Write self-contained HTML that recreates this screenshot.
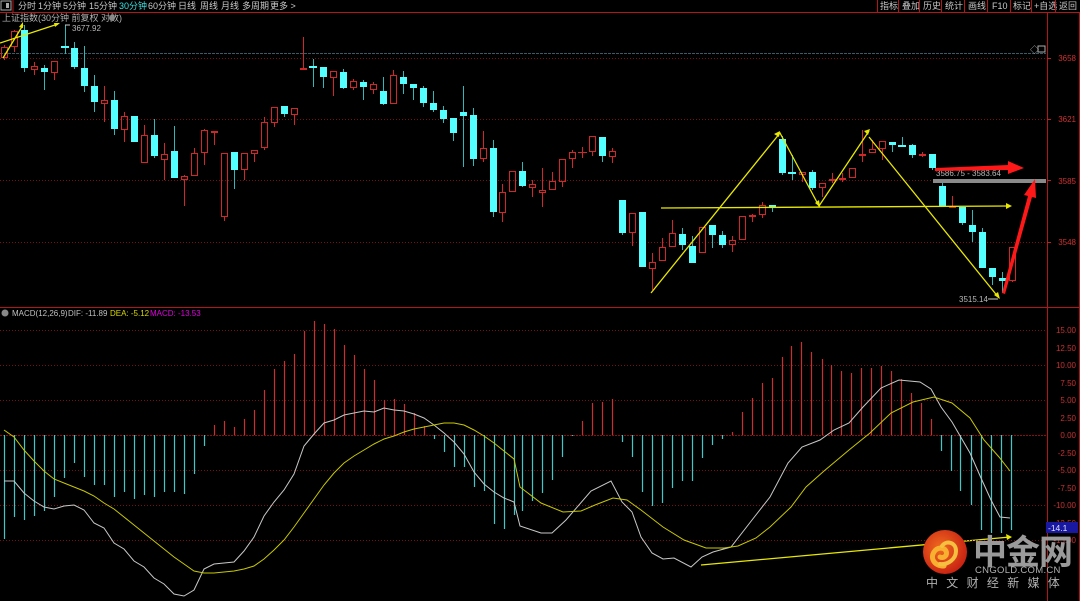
<!DOCTYPE html>
<html><head><meta charset="utf-8">
<style>
html,body{margin:0;padding:0;background:#000;width:1080px;height:601px;overflow:hidden}
svg{display:block}
text{font-family:"Liberation Sans","Noto Sans CJK SC",sans-serif}
</style></head><body>
<svg width="1080" height="601" viewBox="0 0 1080 601" xmlns="http://www.w3.org/2000/svg">
<rect width="1080" height="601" fill="#000"/>
<!-- top bar -->
<g font-size="9" fill="#c8c8c8">
<rect x="1" y="1" width="10" height="9" fill="none" stroke="#aaa" stroke-width="1"/>
<rect x="6" y="3" width="3" height="5" fill="#aaa"/>
<text x="18" y="9">分时</text><text x="38" y="9">1分钟</text><text x="63" y="9">5分钟</text><text x="89" y="9">15分钟</text>
<text x="119" y="9" fill="#40e0e0">30分钟</text><text x="148" y="9">60分钟</text><text x="178" y="9">日线</text><text x="200" y="9">周线</text><text x="221" y="9">月线</text><text x="242" y="9">多周期</text><text x="270" y="9">更多 &gt;</text>
<text x="880" y="9">指标</text><text x="902" y="9">叠加</text><text x="923" y="9">历史</text><text x="945" y="9">统计</text><text x="968" y="9">画线</text><text x="992" y="9">F10</text><text x="1013" y="9">标记</text><text x="1034" y="9">+自选</text><text x="1059" y="9">返回</text>
</g>
<g stroke="#b01818" stroke-width="1">
<line x1="0" y1="12.5" x2="1080" y2="12.5"/>
<line x1="13" y1="0" x2="13" y2="12"/>
<line x1="877.5" y1="0" x2="877.5" y2="12"/><line x1="898.5" y1="0" x2="898.5" y2="12"/><line x1="919.5" y1="0" x2="919.5" y2="12"/><line x1="941.5" y1="0" x2="941.5" y2="12"/><line x1="964.5" y1="0" x2="964.5" y2="12"/><line x1="987.5" y1="0" x2="987.5" y2="12"/><line x1="1010.5" y1="0" x2="1010.5" y2="12"/><line x1="1031.5" y1="0" x2="1031.5" y2="12"/><line x1="1055.5" y1="0" x2="1055.5" y2="12"/>
<line x1="1047.5" y1="12" x2="1047.5" y2="601"/>
<line x1="1079.5" y1="12" x2="1079.5" y2="601"/>
<line x1="0" y1="307.5" x2="1080" y2="307.5"/>
</g>
<text x="2" y="21" font-size="9" fill="#b0b0b0">上证指数(30分钟 前复权 对数)</text>
<circle cx="112" cy="18" r="3" fill="#888"/>
<!-- grids main -->
<line x1="0" y1="53.5" x2="1046" y2="53.5" stroke="#3a5a6a" stroke-dasharray="3,1"/>
<g stroke="#7a1010" stroke-dasharray="1,2">
<line x1="0" y1="58.5" x2="1046" y2="58.5"/><line x1="0" y1="119.5" x2="1046" y2="119.5"/><line x1="0" y1="180.5" x2="1046" y2="180.5"/><line x1="0" y1="242.5" x2="1046" y2="242.5"/>
</g>
<g font-size="8" fill="#d03030" text-anchor="end">
<text x="1076" y="61">3658</text><text x="1076" y="122">3621</text><text x="1076" y="184">3585</text><text x="1076" y="245">3548</text>
</g>
<g stroke="#c02020"><line x1="1047" y1="58.5" x2="1051" y2="58.5"/><line x1="1047" y1="119.5" x2="1051" y2="119.5"/><line x1="1047" y1="180.5" x2="1051" y2="180.5"/><line x1="1047" y1="242.5" x2="1051" y2="242.5"/></g>
<text x="1030" y="53" font-size="9" fill="#aaa">◇</text>
<rect x="1038" y="46" width="7" height="6" fill="none" stroke="#aaa"/>
<!-- cyan candles -->
<path stroke="#30b8b8" stroke-width="1" fill="none" d="M24.5 25V72M44.5 65V90M65.5 25V54M74.5 42V69M84.5 46V92M94.5 75V112M114.5 91V135M134.5 116V142M154.5 119V158M174.5 126V178M234.5 152V189M284.5 106V117M313.5 59V87M323.5 67V88M343.5 69V89M363.5 80V100M383.5 77V105M403.5 71V94M413.5 84V100M423.5 86V107M433.5 91V112M443.5 106V123M453.5 118V141M463.5 86V167M473.5 108V166M493.5 140V217M522.5 162V187M602.5 137V162M622.5 200V235M642.5 212V267M682.5 228V250M692.5 236V263M712.5 225V248M722.5 231V248M772.5 205V212M782.5 136V175M792.5 155V180M812.5 170V190M892.5 142V152M902.5 137V147M912.5 144V158M932.5 154V170M942.5 182V206M962.5 207V225M972.5 210V242M982.5 228V268M992.5 268V285M1002.5 272V293"/>
<path fill="#54ffff" d="M21 30h7v38h-7zM41 68h7v4h-7zM61 46h8v2h-8zM71 48h7v19h-7zM81 68h7v18h-7zM91 86h7v16h-7zM111 100h7v29h-7zM131 116h7v26h-7zM151 135h7v21h-7zM171 151h7v27h-7zM231 152h7v18h-7zM281 106h7v8h-7zM309 66h8v2h-8zM320 67h7v10h-7zM340 72h7v16h-7zM360 82h7v5h-7zM380 91h7v13h-7zM400 77h7v7h-7zM410 84h7v4h-7zM420 88h7v15h-7zM430 103h7v7h-7zM440 110h7v9h-7zM450 118h7v15h-7zM460 112h7v4h-7zM470 115h7v44h-7zM490 148h7v64h-7zM519 171h7v15h-7zM599 137h7v19h-7zM619 200h7v33h-7zM639 212h7v55h-7zM679 234h7v11h-7zM689 246h7v17h-7zM709 225h7v10h-7zM719 235h7v10h-7zM769 205h7v3h-7zM779 139h7v34h-7zM788 172h8v2h-8zM809 172h7v16h-7zM889 142h7v3h-7zM898 145h8v2h-8zM909 145h7v10h-7zM929 154h7v14h-7zM939 186h7v20h-7zM959 207h7v16h-7zM969 225h7v7h-7zM979 232h7v36h-7zM989 268h7v9h-7zM999 278h7v3h-7z"/>
<!-- red candles -->
<path stroke="#d02828" stroke-width="1" fill="none" d="M1.5 47.5h6v10h-6zM4.5 45V47M4.5 58V60M11.5 31.5h6v15h-6zM14.5 30V31M14.5 47V52M31.5 66.5h6v3h-6zM34.5 62V66M34.5 70V75M51.5 61.5h6v11h-6zM54.5 73V80M101.5 100.5h6v3h-6zM104.5 86V100M104.5 104V122M121.5 116.5h6v13h-6zM124.5 112V116M124.5 130V142M141.5 135.5h6v27h-6zM144.5 125V135M161.5 154.5h6v5h-6zM164.5 143V154M164.5 160V180M181.5 176.5h6v3h-6zM184.5 175V176M184.5 180V206M191.5 153.5h6v22h-6zM194.5 148V153M201.5 130.5h6v22h-6zM204.5 129V130M204.5 153V165M211.5 131.5h6v1h-6zM214.5 132V145M221.5 153.5h6v63h-6zM224.5 217V221M241.5 153.5h6v16h-6zM244.5 170V180M251.5 150.5h6v3h-6zM254.5 154V162M261.5 122.5h6v25h-6zM264.5 117V122M264.5 148V150M271.5 107.5h6v15h-6zM274.5 123V127M291.5 108.5h6v6h-6zM294.5 115V125M300.5 68.5h6v1h-6zM303.5 37V68M330.5 71.5h6v6h-6zM333.5 78V96M350.5 81.5h6v6h-6zM353.5 79V81M353.5 88V90M370.5 84.5h6v5h-6zM373.5 82V84M373.5 90V94M390.5 75.5h6v28h-6zM393.5 70V75M480.5 148.5h6v10h-6zM483.5 131V148M483.5 159V162M499.5 192.5h6v20h-6zM502.5 184V192M502.5 213V222M509.5 171.5h6v20h-6zM529.5 184.5h6v3h-6zM532.5 180V184M532.5 188V197M539.5 190.5h6v2h-6zM542.5 168V190M542.5 193V207M549.5 181.5h6v8h-6zM552.5 172V181M559.5 159.5h6v22h-6zM562.5 182V187M569.5 152.5h6v6h-6zM572.5 150V152M572.5 159V168M578 152.5h9M582.5 147V158M589.5 136.5h6v15h-6zM592.5 152V156M609.5 151.5h6v5h-6zM612.5 148V151M612.5 157V163M629.5 213.5h6v19h-6zM632.5 233V246M649.5 262.5h6v6h-6zM652.5 253V262M652.5 269V290M659.5 247.5h6v13h-6zM662.5 238V247M669.5 233.5h6v13h-6zM672.5 220V233M699.5 227.5h6v25h-6zM729.5 240.5h6v4h-6zM732.5 236V240M732.5 245V252M739.5 216.5h6v23h-6zM749.5 215.5h6v1h-6zM752.5 214V215M752.5 217V222M759.5 205.5h6v9h-6zM762.5 202V205M762.5 215V218M799.5 172.5h6v2h-6zM802.5 175V182M819.5 183.5h6v4h-6zM822.5 188V197M829.5 179.5h6v1h-6zM832.5 173V179M832.5 181V183M839.5 178.5h6v1h-6zM842.5 173V178M842.5 180V182M849.5 168.5h6v9h-6zM859.5 154.5h6v1h-6zM862.5 130V154M862.5 156V162M869.5 149.5h6v3h-6zM872.5 140V149M879.5 141.5h6v7h-6zM882.5 149V160M919.5 154.5h6v1h-6zM922.5 152V154M922.5 156V157M949.5 206.5h6v1h-6zM952.5 196V206M1009.5 247.5h6v33h-6zM1012.5 281V282"/>
<!-- labels -->
<path d="M65 25H70" stroke="#ccc" stroke-width="1"/>
<text x="72" y="31" font-size="8" fill="#b8b8b8">3677.92</text>
<text x="959" y="302" font-size="8" fill="#b8b8b8">3515.14</text>
<path d="M988 299H998" stroke="#ccc"/>
<rect x="933" y="179" width="113" height="4" fill="#8a8a8a"/>
<text x="936" y="176" font-size="8" fill="#b8b8b8">3586.75 - 3583.64</text>
<!-- yellow analysis lines -->
<g stroke="#e8e800" stroke-width="1.3" fill="none">
<path d="M0 43L58 24M3 58L23 25"/>
<path d="M651 293L780 133L819 206L869 131M869 137L999 298"/>
<path d="M661 208L1010 206"/>
<path d="M701 565L1010 537"/>
</g>
<g fill="#e8e800">
<path d="M780 131l-6 3 5 3z"/><path d="M820 207l-1-7-4 3z"/><path d="M870 129l-6 2 4 4z"/><path d="M1000 299l-2-7-4 3z"/><path d="M1012 206l-6-3v6z"/><path d="M1012 537l-6-3 1 6z"/><path d="M23 22l-4 5 4 1z"/><path d="M60 23l-6 0 1 4z"/>
</g>
<!-- red arrows -->
<g fill="#ff1818">
<path d="M935 168L1008 165L1008 161L1024 168L1008 174L1008 170L935 171z"/>
<path d="M1002 293L1028 196L1024 195L1035 179L1036 198L1032 197L1005 294z"/>
</g>
<!-- MACD panel -->
<circle cx="5" cy="313" r="3.5" fill="#888"/>
<g font-size="8">
<text x="12" y="316" fill="#c0c0c0">MACD(12,26,9)</text>
<text x="68" y="316" fill="#c0c0c0">DIF: -11.89</text>
<text x="110" y="316" fill="#d8d800">DEA: -5.12</text>
<text x="150" y="316" fill="#e000e0">MACD: -13.53</text>
</g>
<g stroke="#7a1010" stroke-dasharray="1,2">
<line x1="0" y1="330.5" x2="1046" y2="330.5"/><line x1="0" y1="365.5" x2="1046" y2="365.5"/><line x1="0" y1="400.5" x2="1046" y2="400.5"/><line x1="0" y1="470.5" x2="1046" y2="470.5"/><line x1="0" y1="505.5" x2="1046" y2="505.5"/><line x1="0" y1="540.5" x2="1046" y2="540.5"/>
</g>
<line x1="0" y1="435.5" x2="1046" y2="435.5" stroke="#8a1010" stroke-dasharray="2,1"/>
<g font-size="8" fill="#c83030" text-anchor="end">
<text x="1076" y="333">15.00</text><text x="1076" y="351">12.50</text><text x="1076" y="368">10.00</text><text x="1076" y="386">7.50</text><text x="1076" y="403">5.00</text><text x="1076" y="421">2.50</text><text x="1076" y="438">0.00</text><text x="1076" y="456">-2.50</text><text x="1076" y="473">-5.00</text><text x="1076" y="491">-7.50</text><text x="1076" y="508">-10.00</text><text x="1076" y="526">-12.50</text><text x="1076" y="543">-15.00</text>
</g>
<path stroke="#40c8c8" stroke-width="1.2" d="M4.5 435V539M14.5 435V517M24.5 435V520M34.5 435V516M44.5 435V511M54.5 435V497M64.5 435V478M74.5 435V463M84.5 435V477M94.5 435V485M104.5 435V485M114.5 435V497M124.5 435V492M134.5 435V499M144.5 435V495M154.5 435V497M164.5 435V492M174.5 435V492M184.5 435V494M194.5 435V474M204.5 435V446M434.5 435V439M444.5 435V452M454.5 435V467M464.5 435V467M474.5 435V487M484.5 435V491M494.5 435V524M504.5 435V529M514.5 435V515M522.5 435V511M532.5 435V501M542.5 435V493M552.5 435V480M562.5 435V457M572.5 435V436M622.5 435V442M632.5 435V457M642.5 435V492M652.5 435V506M662.5 435V503M672.5 435V488M682.5 435V481M692.5 435V481M702.5 435V458M712.5 435V445M722.5 435V439M941.5 435V451M951.5 435V471M960.5 435V491M971.5 435V505M981.5 435V530M991.5 435V533M1001.5 435V533M1011.5 435V530"/>
<path stroke="#c83030" stroke-width="1.2" d="M214.5 435V425M224.5 435V421M234.5 435V427M244.5 435V419M254.5 435V410M264.5 435V390M274.5 435V369M284.5 435V361M294.5 435V354M304.5 435V331M314.5 435V321M324.5 435V324M334.5 435V329M344.5 435V345M354.5 435V355M364.5 435V369M374.5 435V380M384.5 435V400M394.5 435V399M404.5 435V404M414.5 435V413M424.5 435V426M582.5 435V421M592.5 435V403M602.5 435V402M612.5 435V399M732.5 435V432M742.5 435V412M752.5 435V398M762.5 435V383M772.5 435V378M782.5 435V357M791.5 435V346M801.5 435V342M811.5 435V352M822.5 435V359M831.5 435V365M841.5 435V371M851.5 435V373M861.5 435V368M871.5 435V368M881.5 435V366M891.5 435V371M901.5 435V379M911.5 435V393M921.5 435V403M931.5 435V419"/>
<polyline fill="none" stroke="#c8c8c8" stroke-width="1" points="4,481 14,481 24,493 34,501 44,507 54,509 64,506 74,505 84,510 94,523 104,528 114,543 124,549 134,561 144,567 154,578 164,584 174,594 184,596 194,590 204,569 214,564 224,563 234,562 244,551 254,537 264,516 274,502 284,490 294,474 304,446 314,434 324,423 334,420 344,415 354,413 364,411 374,412 384,408 394,410 404,411 414,414 424,418 434,425 444,433 454,442 464,454 474,472 484,484 494,492 504,498 514,502 520,526 541,533 552,533 566,520 591,491 611,481 622,502 632,512 641,537 652,553 663,559 674,558 691,567 702,557 713,552 731,547 752,520 770,497 788,463 802,447 820,440 834,430 849,423 863,407 881,388 899,380 920,382 931,389 941,407 952,422 970,453 981,478 991,500 1000,517 1010,518"/>
<polyline fill="none" stroke="#c8c800" stroke-width="1" points="4,430 14,437 24,450 34,461 44,471 54,479 64,483 74,487 84,491 94,496 104,503 114,509 124,517 134,525 144,533 154,541 164,549 174,557 184,564 194,571 204,573 214,573 224,572 234,571 244,569 254,566 264,559 274,550 284,540 294,527 304,513 314,499 324,485 334,473 344,463 354,456 364,450 374,444 384,439 394,436 404,432 414,429 424,427 434,425 444,423 454,423 464,425 474,430 484,436 494,443 504,451 514,459 520,487 541,503 563,512 581,511 595,505 613,498 627,500 641,510 663,527 684,540 706,548 724,548 738,546 756,538 770,527 791,507 806,487 824,471 849,450 870,433 891,413 913,402 934,397 952,403 970,418 984,440 999,457 1010,471"/>
<rect x="1046" y="522" width="32" height="11" fill="#1818a0"/>
<text x="1048" y="531" font-size="8.5" fill="#e0e0ff">-14.1</text>
<!-- logo -->
<defs><radialGradient id="lg" cx="0.4" cy="0.4" r="0.7"><stop offset="0" stop-color="#f06a20"/><stop offset="1" stop-color="#c41a10"/></radialGradient></defs>
<circle cx="945" cy="552" r="22" fill="url(#lg)"/>
<path d="M944 566c-10 0-14-8-10-14 3-5 10-5 12-1 2 4-2 8-6 6" fill="none" stroke="#f8b030" stroke-width="5" stroke-linecap="round"/>
<path d="M942 546c4-6 14-4 14 5 0 8-8 14-16 13" fill="none" stroke="#f5c040" stroke-width="4" stroke-linecap="round"/>
<text x="973" y="564" font-size="34" font-weight="bold" fill="#9a9a9a" font-family="'Noto Sans CJK SC',sans-serif" letter-spacing="-1">中金网</text>
<text x="975" y="573" font-size="9.5" fill="#b0b0b0" letter-spacing="0.3">CNGOLD.COM.CN</text>
<text x="926" y="587" font-size="12" fill="#b0b0b0" letter-spacing="8.3">中文财经新媒体</text>
</svg>
</body></html>
